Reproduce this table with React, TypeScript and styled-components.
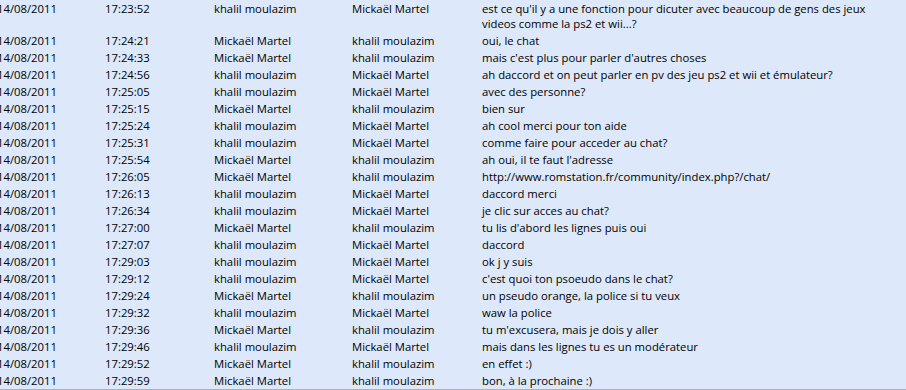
import React from "react";
import styled, { createGlobalStyle } from "styled-components";

const Global = createGlobalStyle`
  html, body { margin: 0; padding: 0; background: #f4f4f4; overflow: hidden; }
  #root { width: 906px; height: 390px; overflow: hidden; }
`;

const Table = styled.div`
  width: 906px;
  background: #dde9fa;
  border-bottom: 1px solid #a9b2bd;
  font-family: "Open Sans", "Noto Sans", sans-serif;
  font-size: 11.3px;
  color: #000;
  overflow: hidden;
`;

const Row = styled.div<{ $tall?: boolean }>`
  display: grid;
  grid-template-columns: 108px 109px 138px 130px 424px;
  margin-left: -3px;
  padding: 1px 0;
  line-height: 15px;
  height: ${(p) => (p.$tall ? "30px" : "15px")};
`;

const Cell = styled.div`
  white-space: nowrap;
`;

const Message = styled.div`
  white-space: pre-line;
`;

type Msg = [string, string, boolean, string];

const K = "khalil moulazim";
const M = "Mickaël Martel";

const rows: Msg[] = [
  ["17:23:52", K, false, "est ce qu'il y a une fonction pour dicuter avec beaucoup de gens des jeux\nvideos comme la ps2 et wii...?"],
  ["17:24:21", M, true, "oui, le chat"],
  ["17:24:33", M, true, "mais c'est plus pour parler d'autres choses"],
  ["17:24:56", K, false, "ah daccord et on peut parler en pv des jeu ps2 et wii et émulateur?"],
  ["17:25:05", K, false, "avec des personne?"],
  ["17:25:15", M, true, "bien sur"],
  ["17:25:24", K, false, "ah cool merci pour ton aide"],
  ["17:25:31", K, false, "comme faire pour acceder au chat?"],
  ["17:25:54", M, true, "ah oui, il te faut l'adresse"],
  ["17:26:05", M, true, "http://www.romstation.fr/community/index.php?/chat/"],
  ["17:26:13", K, false, "daccord merci"],
  ["17:26:34", K, false, "je clic sur acces au chat?"],
  ["17:27:00", M, true, "tu lis d'abord les lignes puis oui"],
  ["17:27:07", K, false, "daccord"],
  ["17:29:03", K, false, "ok j y suis"],
  ["17:29:12", K, false, "c'est quoi ton psoeudo dans le chat?"],
  ["17:29:24", M, true, "un pseudo orange, la police si tu veux"],
  ["17:29:32", K, false, "waw la police"],
  ["17:29:36", M, true, "tu m'excusera, mais je dois y aller"],
  ["17:29:46", K, false, "mais dans les lignes tu es un modérateur"],
  ["17:29:52", M, true, "en effet :)"],
  ["17:29:59", M, true, "bon, à la prochaine :)"],
];

export default function App() {
  return (
    <>
      <Global />
      <Table>
        {rows.map(([time, from, fromM, text], i) => (
          <Row key={i} $tall={i === 0}>
            <Cell>14/08/2011</Cell>
            <Cell>{time}</Cell>
            <Cell>{from}</Cell>
            <Cell>{fromM ? K : M}</Cell>
            <Message>{text}</Message>
          </Row>
        ))}
      </Table>
    </>
  );
}
